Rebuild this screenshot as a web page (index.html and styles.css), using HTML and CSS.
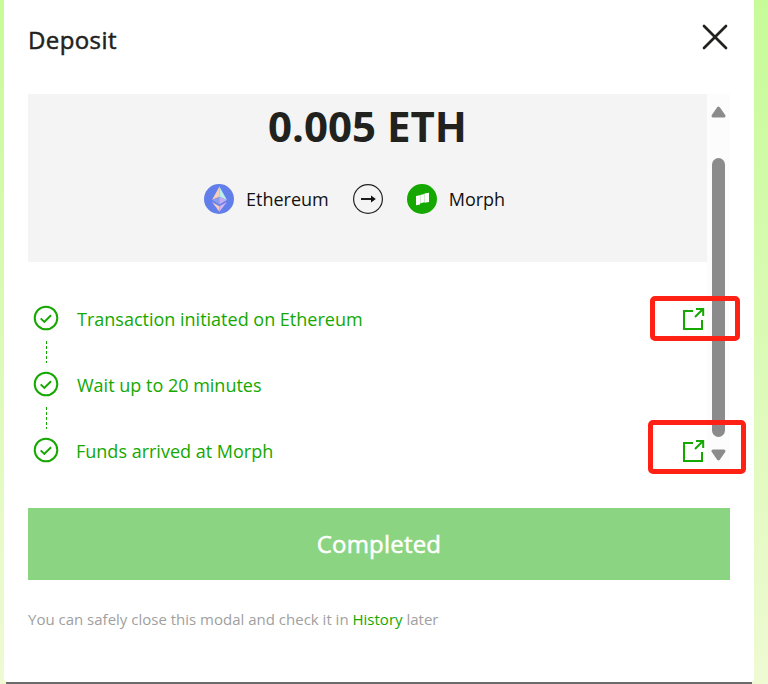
FILE: index.html
```html
<!DOCTYPE html>
<html lang="en">
<head>
<meta charset="utf-8">
<title>Deposit</title>
<link rel="stylesheet" href="styles.css">
</head>
<body>
<svg class="defs" width="0" height="0" aria-hidden="true">
  <symbol id="check" viewBox="0 0 26 26"><circle cx="13" cy="13" r="11.3" fill="none" stroke="currentColor" stroke-width="2"/><path d="M7.7 13.4l3.6 3.5 6.8-6.6" fill="none" stroke="currentColor" stroke-width="2"/></symbol>
  <symbol id="external" viewBox="0 0 24 24"><path d="M11 4H2v18h18v-9M14 2h7.2v7M13 10l8-8" fill="none" stroke="currentColor" stroke-width="2"/></symbol>
</svg>
<main class="modal">
  <header class="header">
    <h1 class="title">Deposit</h1>
    <svg class="close" viewBox="0 0 26 26"><path d="M2 2l22 22M24 2L2 24" fill="none" stroke="#21221e" stroke-width="2.7" stroke-linecap="round"/></svg>
  </header>
  <section class="scroller">
    <div class="content">
      <div class="summary">
        <div class="amount">0.005 ETH</div>
        <div class="route">
          <svg class="coin" viewBox="0 0 30 30"><circle cx="15" cy="15" r="15" fill="#627eea"/><path d="M15.4 2.5v10.2L8 16z" fill="#f6cdbc"/><path d="M15.4 2.5v10.2l7.5 3.3z" fill="#b9f0e9"/><path d="M15.4 12.7L8 16l7.4 4.4z" fill="#8a9bed"/><path d="M15.4 12.7l7.5 3.3-7.5 4.4z" fill="#c5acf2"/><path d="M8 18l7.4 4.3v5.5z" fill="#f3cbc1"/><path d="M22.9 18l-7.5 4.3v5.5z" fill="#d5b3ef"/></svg>
          <span class="chain">Ethereum</span>
          <svg class="arrow" viewBox="0 0 30 30"><circle cx="15" cy="15" r="14.4" fill="none" stroke="#21221e" stroke-width="1.2"/><path d="M8 15h12" stroke="#111" stroke-width="1.9"/><path d="M18 11.4l4.8 3.6-4.8 3.6z" fill="#111"/></svg>
          <svg class="coin" viewBox="0 0 30 30"><circle cx="15" cy="15" r="15" fill="#14a800"/><path d="M9 11.9l4-.6v9.2l-4 .8zM13.2 11l4.1-1v8.3l-4.1 1.1zM17.5 9.6l4.5-.8v9.3l-4.5.6z" fill="#fff"/></svg>
          <span class="chain">Morph</span>
        </div>
      </div>
      <div class="steps">
        <div class="step marked-first"><svg class="check"><use href="#check"/></svg><span class="label">Transaction initiated on Ethereum</span><svg class="external"><use href="#external"/></svg></div>
        <div class="dash"></div>
        <div class="step"><svg class="check"><use href="#check"/></svg><span class="label">Wait up to 20 minutes</span></div>
        <div class="dash"></div>
        <div class="step marked-last"><svg class="check"><use href="#check"/></svg><span class="label last">Funds arrived at Morph</span><svg class="external"><use href="#external"/></svg></div>
      </div>
    </div>
    <div class="scrollbar">
      <svg class="tip" viewBox="0 0 14 11"><path d="M7 2L12 9.2H2z" fill="#8b8b8b" stroke="#8b8b8b" stroke-width="3" stroke-linejoin="round"/></svg>
      <div class="thumb"></div>
      <svg class="tip down" viewBox="0 0 14 11"><path d="M7 2L12 9.2H2z" fill="#8b8b8b" stroke="#8b8b8b" stroke-width="3" stroke-linejoin="round"/></svg>
    </div>
  </section>
  <button class="button">Completed</button>
  <p class="note">You can safely close this modal and check it in <a class="link">History</a> later</p>
</main>
</body>
</html>
```
FILE: styles.css
```css
*, *::after { box-sizing: border-box; }
body {
  margin: 0;
  height: 684px;
  overflow: hidden;
  padding-left: 4px;
  font-family: "Open Sans", "Noto Sans", sans-serif;
  background: linear-gradient(#6b6b6b, #6b6b6b) 6px 682px / 746px 2px no-repeat, linear-gradient(#c7fb98, #effad3);
}
.defs { position: absolute; }
.modal {
  width: 750px;
  height: 682px;
  padding: 0 24px;
  background: #fff;
  border-radius: 0 0 4px 4px;
}
.header {
  height: 94px;
  display: flex;
  justify-content: space-between;
  padding: 24px 2px 0 0;
}
.title {
  margin: 0;
  font-size: 24px;
  line-height: 31px;
  font-weight: 500;
  letter-spacing: .4px;
  -webkit-text-stroke: .5px #21221e;
  color: #21221e;
}
.close { width: 26px; height: 26px; }
.scroller { height: 379px; display: flex; }
.content { width: 679px; }
.summary {
  height: 168px;
  background: #f4f4f4;
  text-align: center;
  color: #21221e;
}
.amount { font-size: 42px; font-weight: 700; line-height: 64px; padding-bottom: 26px; }
.route { display: flex; align-items: center; height: 30px; padding-left: 176px; }
.coin, .arrow { width: 30px; height: 30px; flex: none; }
.chain { margin-left: 12px; font-size: 18px; line-height: 30px; white-space: nowrap; color: #111; }
.arrow { margin: 0 24px; }
.steps { padding: 43px 1px 0 5px; color: #14a800; }
.step { height: 26px; display: flex; align-items: center; position: relative; }
.check { width: 26px; height: 26px; }
.label { margin-left: 18px; padding-top: 2px; font-size: 18px; line-height: 26px; }
.last { margin-left: 17px; }
.external { width: 24px; height: 24px; margin: 2px 0 0 auto; }
.dash {
  width: 1px;
  height: 22px;
  margin: 10px 0 8px 13px;
  background: repeating-linear-gradient(#14a800 0 3px, transparent 3px 5px);
}
.marked-first::after, .marked-last::after {
  content: "";
  position: absolute;
  border: 5px solid #ff2114;
  border-radius: 5px;
}
.marked-first::after { left: 617px; top: -9px; width: 90px; height: 45px; }
.marked-last::after { left: 615px; top: -17px; width: 98px; height: 54px; }
.scrollbar {
  width: 23px;
  padding-top: 12px;
  background: #fcfcfc;
  display: flex;
  flex-direction: column;
  align-items: center;
}
.tip { width: 15px; height: 12px; }
.down { transform: rotate(180deg); margin-top: 12px; }
.thumb { width: 13px; height: 279px; margin-top: 40px; border-radius: 7px; background: #8b8b8b; }
.button {
  display: block;
  width: 702px;
  height: 72px;
  margin: 35px 0 0;
  padding: 0;
  border: 0;
  background: #8bd582;
  color: #fff;
  font: 500 24px/70px "Open Sans", "Noto Sans", sans-serif;
  letter-spacing: .2px;
  -webkit-text-stroke: .5px #fff;
}
.note { margin: 28px 0 0; font-size: 15px; line-height: 22px; color: #a0a0a0; }
.link { color: #14a800; }
```
